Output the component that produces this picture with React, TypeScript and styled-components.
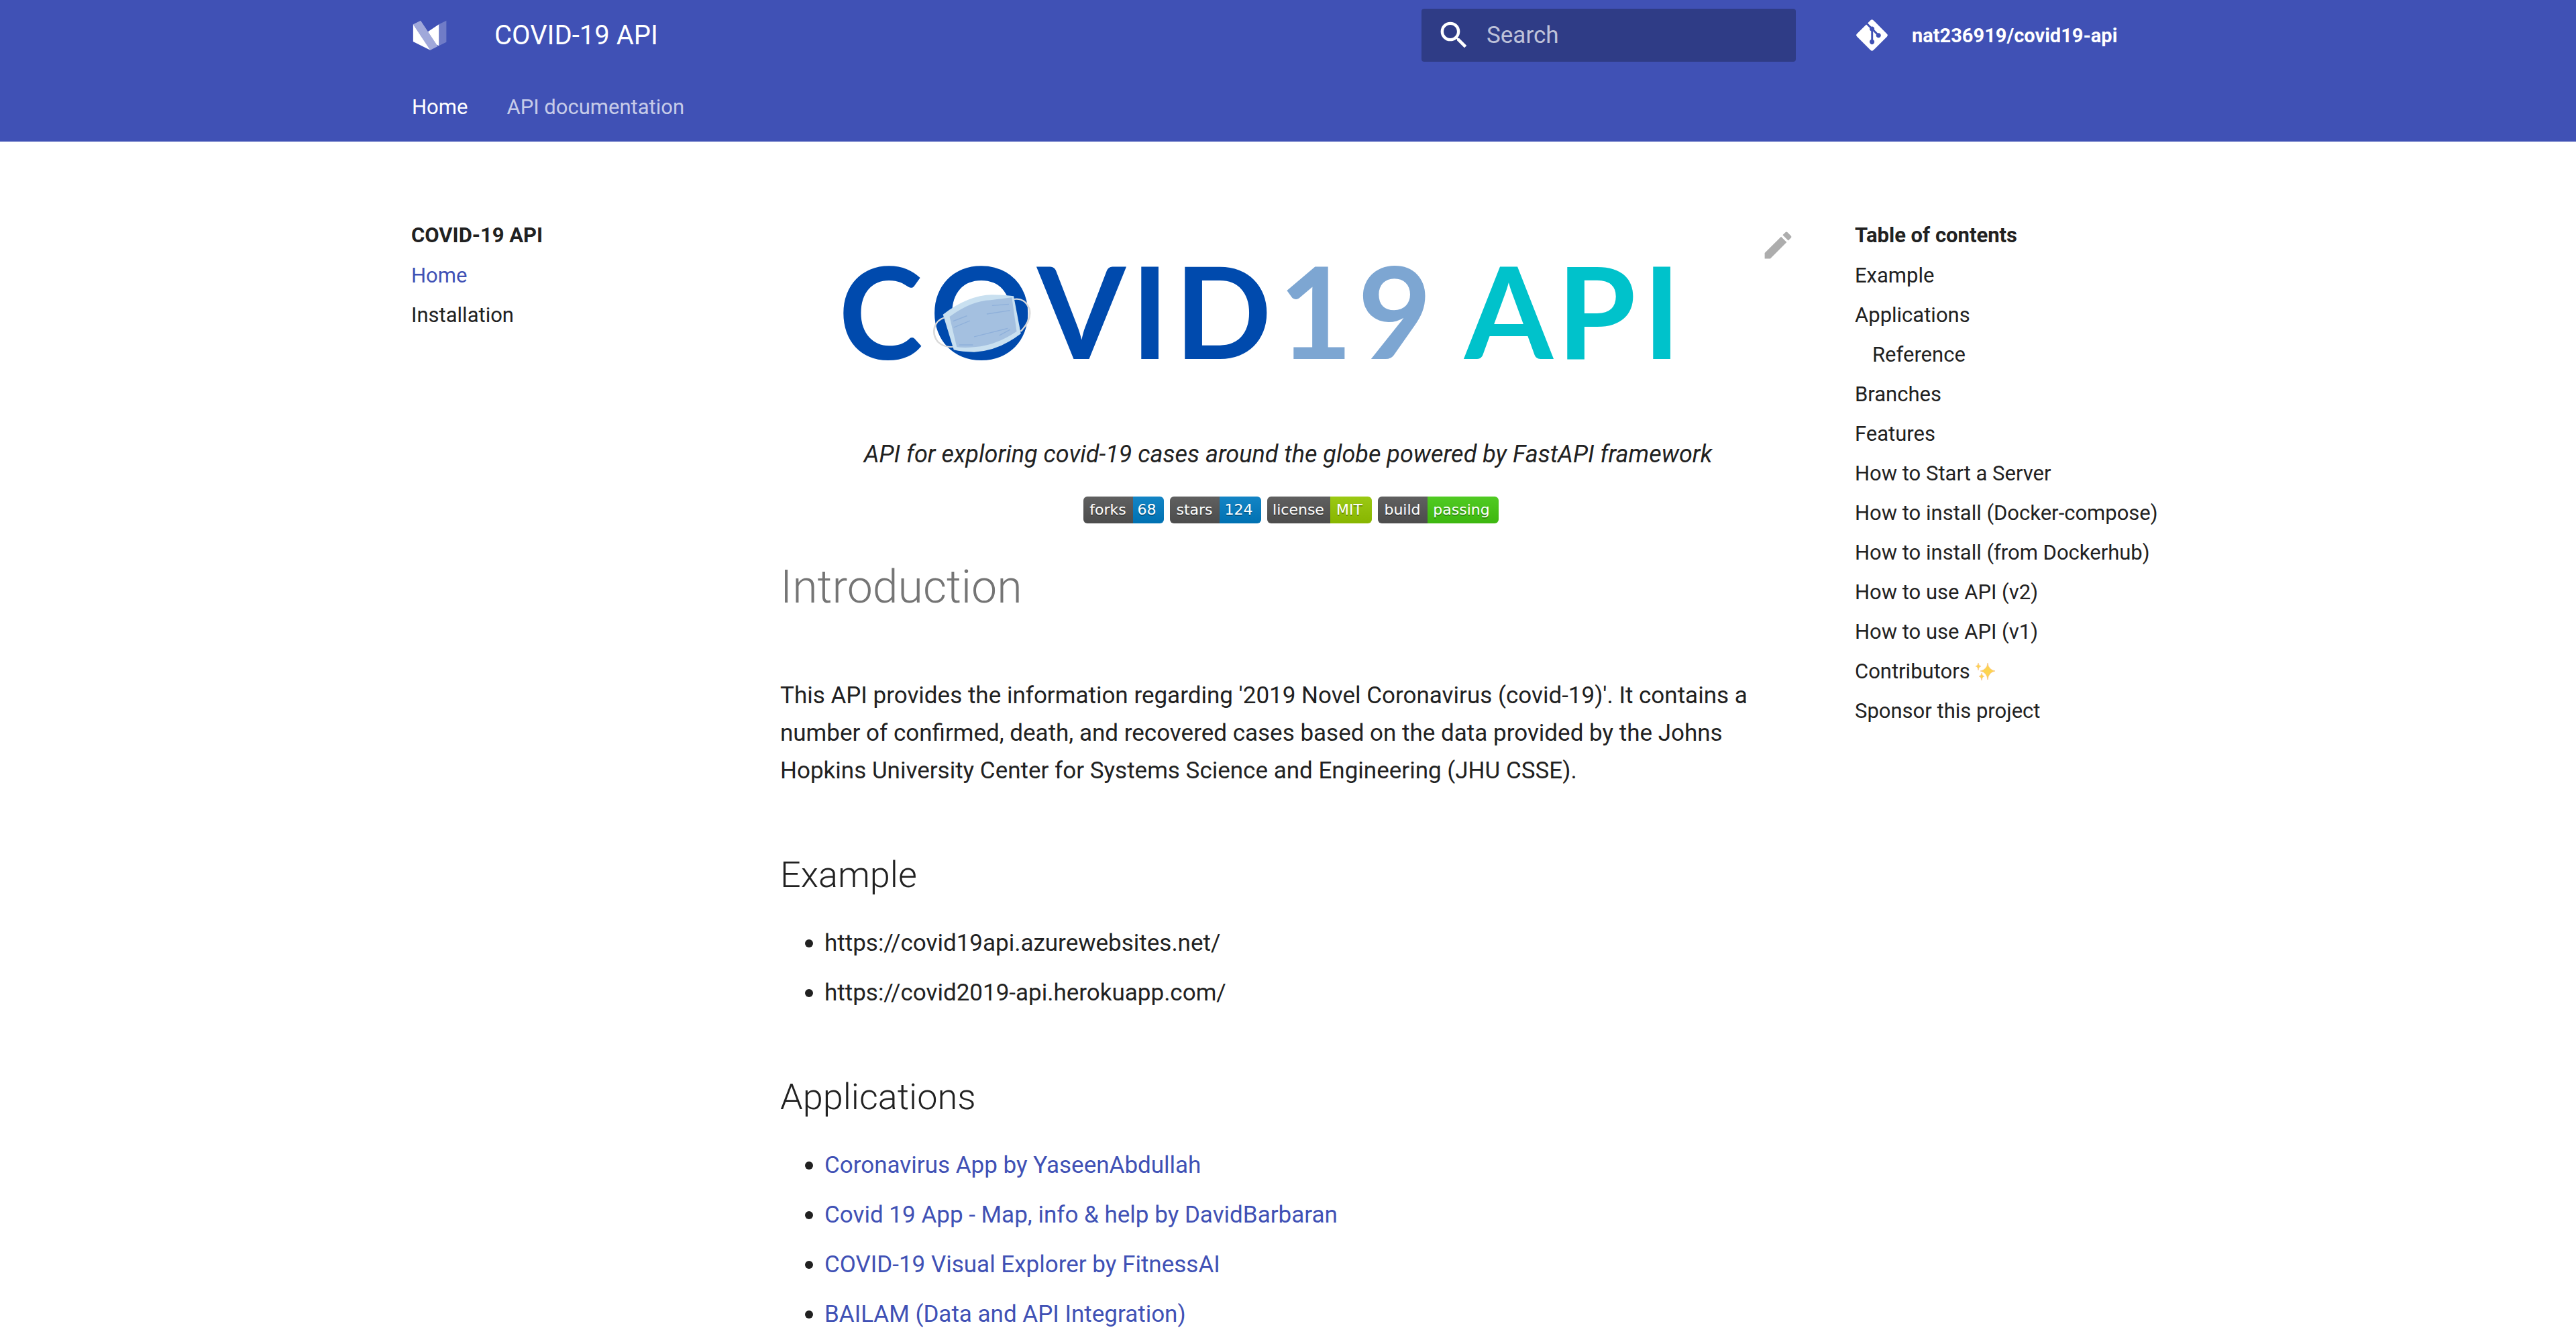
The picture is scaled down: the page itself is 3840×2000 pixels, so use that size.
import React from 'react';
import styled, { createGlobalStyle } from 'styled-components';
import { FaGitAlt } from 'react-icons/fa';

const INDIGO = '#4051b5';
const INK = '#212121';

const GlobalStyle = createGlobalStyle`
  * { box-sizing: border-box; }
  body {
    margin: 0;
    background: #fff;
    color: ${INK};
    font-family: Roboto, "Liberation Sans", sans-serif;
    font-size: 35px;
    line-height: 56px;
  }
  a { color: inherit; text-decoration: none; }
  ul { list-style: none; margin: 0; padding: 0; }
`;

const Header = styled.header`
  background: ${INDIGO};
  color: #fff;
`;

const Grid = styled.div`
  max-width: 2684px;
  margin: 0 auto;
`;

const TopBar = styled(Grid)`
  display: flex;
  align-items: center;
  height: 105px;
  padding: 0 36px;
`;

const LogoLink = styled.a`
  display: flex;
  margin-right: 70px;
`;

const SiteTitle = styled.span`
  flex: 1;
  font-size: 40px;
`;

const SearchForm = styled.form`
  display: flex;
  align-items: center;
  gap: 22px;
  width: 558px;
  height: 79px;
  padding: 0 22px;
  margin-right: 90px;
  border-radius: 4px;
  background: rgba(0, 0, 0, 0.26);
`;

const SearchInput = styled.input`
  flex: 1;
  min-width: 0;
  padding: 0;
  border: 0;
  outline: 0;
  background: transparent;
  color: #fff;
  font: inherit;
  &::placeholder { color: rgba(255, 255, 255, 0.7); opacity: 1; }
`;

const Repo = styled.a`
  display: flex;
  align-items: center;
  gap: 36px;
  width: 459px;
  font-size: 29px;
  font-weight: 700;
`;

const GitIcon = styled(FaGitAlt)`
  width: 47px;
  height: 53px;
`;

const Tabs = styled.nav`
  display: flex;
  align-items: center;
  gap: 58px;
  height: 106px;
  padding: 4px 36px 0;
  font-size: 31px;
`;

const Tab = styled.a<{ $active?: boolean }>`
  opacity: ${p => (p.$active ? 1 : 0.7)};
`;

const Columns = styled(Grid)`
  display: grid;
  grid-template-columns: 532px 1fr 532px;
  padding-top: 110px;
`;

const SideNav = styled.nav`
  padding-left: 35px;
  font-size: 31px;
  line-height: 59px;
`;

const SideTitle = styled.div`
  padding-bottom: 1px;
  font-weight: 700;
`;

const SideItem = styled.li<{ $active?: boolean; $nested?: boolean }>`
  padding-left: ${p => (p.$nested ? 26 : 0)}px;
  color: ${p => (p.$active ? INDIGO : 'inherit')};
`;

const SideLink = styled.a`
  display: flex;
  align-items: center;
  gap: 6px;
`;

const Article = styled.article`
  position: relative;
  padding: 10px 53px 0;
`;

const EditLink = styled.a`
  position: absolute;
  top: 18px;
  right: 53px;
  display: flex;
  color: #adadad;
`;

const Banner = styled.svg`
  display: block;
  width: 100%;
`;

const Tagline = styled.p`
  margin: 48px 0 0;
  font-size: 36px;
  text-align: center;
`;

const Badges = styled.p`
  display: flex;
  justify-content: center;
  gap: 9px;
  margin: 35px 0 0;
  padding-left: 8px;
`;

const Badge = styled.a`
  display: flex;
  height: 40px;
  overflow: hidden;
  border-radius: 6px;
  color: #fff;
  font: 22px/40px "DejaVu Sans", Verdana, sans-serif;
  text-shadow: 0 2px 0 rgba(1, 1, 1, 0.3);
`;

const BadgePart = styled.span<{ $width: number; $color: string }>`
  width: ${p => p.$width}px;
  text-align: center;
  background: linear-gradient(rgba(187, 187, 187, 0.1), rgba(0, 0, 0, 0.1)), ${p => p.$color};
`;

const BadgeValue = styled(BadgePart)`
  padding-right: 4px;
`;

const Title = styled.h1`
  margin: 49px 0 0;
  color: #757575;
  font-size: 68px;
  font-weight: 300;
  line-height: 92px;
`;

const Lead = styled.p`
  margin: 88px 0 0;
`;

const Heading = styled.h2`
  margin: 88px 0 0;
  font-size: 54px;
  font-weight: 300;
  line-height: 78px;
`;

const List = styled.ul`
  display: flex;
  flex-direction: column;
  gap: 18px;
  margin-top: 35px;
`;

const ListItem = styled.li`
  display: flex;
  align-items: center;
  gap: 17px;
  padding-left: 37px;
  &::before {
    content: "";
    width: 12px;
    height: 12px;
    border-radius: 50%;
    background: ${INK};
  }
`;

const ArticleLink = styled.a`
  color: ${INDIGO};
`;

const MaterialLogo = () => (
  <svg width="53" height="53" viewBox="0 0 89 89" fill="#fff" aria-hidden="true">
    <path d="M3.136,17.387l0,42.932l42.932,21.467l-42.932,-64.399Z" />
    <path d="M21.91,8l42.933,64.398l-18.775,9.388l-42.932,-64.399l18.774,-9.387Z" fillOpacity="0.5" />
    <path d="M67.535,17.387l-27.262,18.156l21.878,32.818l5.384,2.691l0,-53.665Z" />
    <path d="M67.535,17.387l0,53.666l18.774,-9.388l0,-53.665l-18.774,9.387Z" fillOpacity="0.25" />
  </svg>
);

const SearchIcon = () => (
  <svg width="53" height="53" viewBox="0 0 24 24" fill="currentColor" aria-hidden="true">
    <path d="M9.5 3A6.5 6.5 0 0 1 16 9.5c0 1.61-.59 3.09-1.56 4.23l.27.27h.79l5 5-1.5 1.5-5-5v-.79l-.27-.27A6.516 6.516 0 0 1 9.5 16 6.5 6.5 0 0 1 3 9.5 6.5 6.5 0 0 1 9.5 3m0 2C7 5 5 7 5 9.5S7 14 9.5 14 14 12 14 9.5 12 5 9.5 5z" />
  </svg>
);

const PencilIcon = () => (
  <svg width="53" height="53" viewBox="0 0 24 24" fill="currentColor" aria-hidden="true">
    <path d="M20.71 7.04c.39-.39.39-1.04 0-1.41l-2.34-2.34c-.37-.39-1.02-.39-1.41 0l-1.84 1.83 3.75 3.75M3 17.25V21h3.75L17.81 9.93l-3.75-3.75L3 17.25z" />
  </svg>
);

const Sparkles = () => (
  <svg width="31" height="31" viewBox="0 0 31 31" fill="#fdd44f" stroke="#f7b878" strokeWidth="0.6" role="img" aria-label="sparkles">
    <path d="M20 3q1 10 11 12q-10 2-11 13q-1-11-11-13q10-2 11-12z" />
    <path d="M6 3q.5 4.500 4 5q-3.500.5-4 6q-.5-5.500-4-6q3.500-.5 4-5z" />
    <path d="M11 18q.5 4.500 4 5q-3.500.5-4 6q-.5-5.500-4-6q3.500-.5 4-5z" />
  </svg>
);

const CovidBanner = () => (
  <Banner viewBox="0 0 1514 270" role="img" aria-label="COVID19 API" fontFamily="Lato, sans-serif" fontWeight="700" fontSize="190">
    <text y="204" x="87 223 383 523 588" fill="#004aad">COVID</text>
    <text y="204" x="743 861" fill="#7da6d2">19</text>
    <text y="204" x="1020 1158 1286" fill="#00c2cb">API</text>
    <g transform="translate(57 29) scale(0.4464 0.3333)">
      <path d="M420 340C385 355 375 410 400 450Q420 475 450 470" fill="none" stroke="#dadada" strokeWidth="6" />
      <path d="M652 258Q690 250 704 300Q714 350 675 402" fill="none" stroke="#dadada" strokeWidth="6" />
      <path d="M416 326Q500 240 580 238Q620 238 652 244L676 412Q600 490 520 494Q480 494 452 484Z" fill="#c9e0f0" />
      <path d="M438 336Q510 265 575 262Q620 254 646 250L662 402Q590 466 520 472Q490 476 462 472Z" fill="#a4c0e0" />
      <path d="M450 356L496 332M452 384L506 354M580 286L636 280M562 324L640 308M520 426L632 388M604 420L640 394M470 462H516" fill="none" stroke="#8fb0da" strokeWidth="4" />
    </g>
  </Banner>
);

const badges = [
  { label: 'forks', value: '68', widths: [74, 46], color: '#007ec6' },
  { label: 'stars', value: '124', widths: [74, 62], color: '#007ec6' },
  { label: 'license', value: 'MIT', widths: [94, 62], color: '#97ca00' },
  { label: 'build', value: 'passing', widths: [74, 106], color: '#44cc11' },
];

const contents = [
  { text: 'Example' },
  { text: 'Applications' },
  { text: 'Reference', nested: true },
  { text: 'Branches' },
  { text: 'Features' },
  { text: 'How to Start a Server' },
  { text: 'How to install (Docker-compose)' },
  { text: 'How to install (from Dockerhub)' },
  { text: 'How to use API (v2)' },
  { text: 'How to use API (v1)' },
  { text: 'Contributors', sparkles: true },
  { text: 'Sponsor this project' },
];

const applications = [
  'Coronavirus App by YaseenAbdullah',
  'Covid 19 App - Map, info & help by DavidBarbaran',
  'COVID-19 Visual Explorer by FitnessAI',
  'BAILAM (Data and API Integration)',
];

export default function App() {
  return (
    <>
      <GlobalStyle />
      <Header>
        <TopBar>
          <LogoLink href="#" aria-label="COVID-19 API"><MaterialLogo /></LogoLink>
          <SiteTitle>COVID-19 API</SiteTitle>
          <SearchForm role="search">
            <SearchIcon />
            <SearchInput type="text" aria-label="Search" placeholder="Search" />
          </SearchForm>
          <Repo href="#"><GitIcon />nat236919/covid19-api</Repo>
        </TopBar>
        <Grid>
          <Tabs>
            <Tab href="#" $active>Home</Tab>
            <Tab href="#">API documentation</Tab>
          </Tabs>
        </Grid>
      </Header>
      <Columns as="main">
        <SideNav aria-label="Navigation">
          <SideTitle>COVID-19 API</SideTitle>
          <ul>
            <SideItem $active><SideLink href="#">Home</SideLink></SideItem>
            <SideItem><SideLink href="#">Installation</SideLink></SideItem>
          </ul>
        </SideNav>
        <Article>
          <EditLink href="#" aria-label="Edit this page"><PencilIcon /></EditLink>
          <CovidBanner />
          <Tagline><em>API for exploring covid-19 cases around the globe powered by FastAPI framework</em></Tagline>
          <Badges>
            {badges.map(b => (
              <Badge href="#" key={b.label}>
                <BadgePart $width={b.widths[0]} $color="#555">{b.label}</BadgePart>
                <BadgeValue $width={b.widths[1]} $color={b.color}>{b.value}</BadgeValue>
              </Badge>
            ))}
          </Badges>
          <Title>Introduction</Title>
          <Lead>
            This API provides the information regarding '2019 Novel Coronavirus (covid-19)'. It contains a
            number of confirmed, death, and recovered cases based on the data provided by the Johns
            Hopkins University Center for Systems Science and Engineering (JHU CSSE).
          </Lead>
          <Heading>Example</Heading>
          <List>
            <ListItem>https://covid19api.azurewebsites.net/</ListItem>
            <ListItem>https://covid2019-api.herokuapp.com/</ListItem>
          </List>
          <Heading>Applications</Heading>
          <List>
            {applications.map(name => (
              <ListItem key={name}><ArticleLink href="#">{name}</ArticleLink></ListItem>
            ))}
          </List>
        </Article>
        <SideNav aria-label="Table of contents">
          <SideTitle>Table of contents</SideTitle>
          <ul>
            {contents.map(c => (
              <SideItem key={c.text} $nested={c.nested}>
                <SideLink href="#">{c.text}{c.sparkles && <Sparkles />}</SideLink>
              </SideItem>
            ))}
          </ul>
        </SideNav>
      </Columns>
    </>
  );
}
